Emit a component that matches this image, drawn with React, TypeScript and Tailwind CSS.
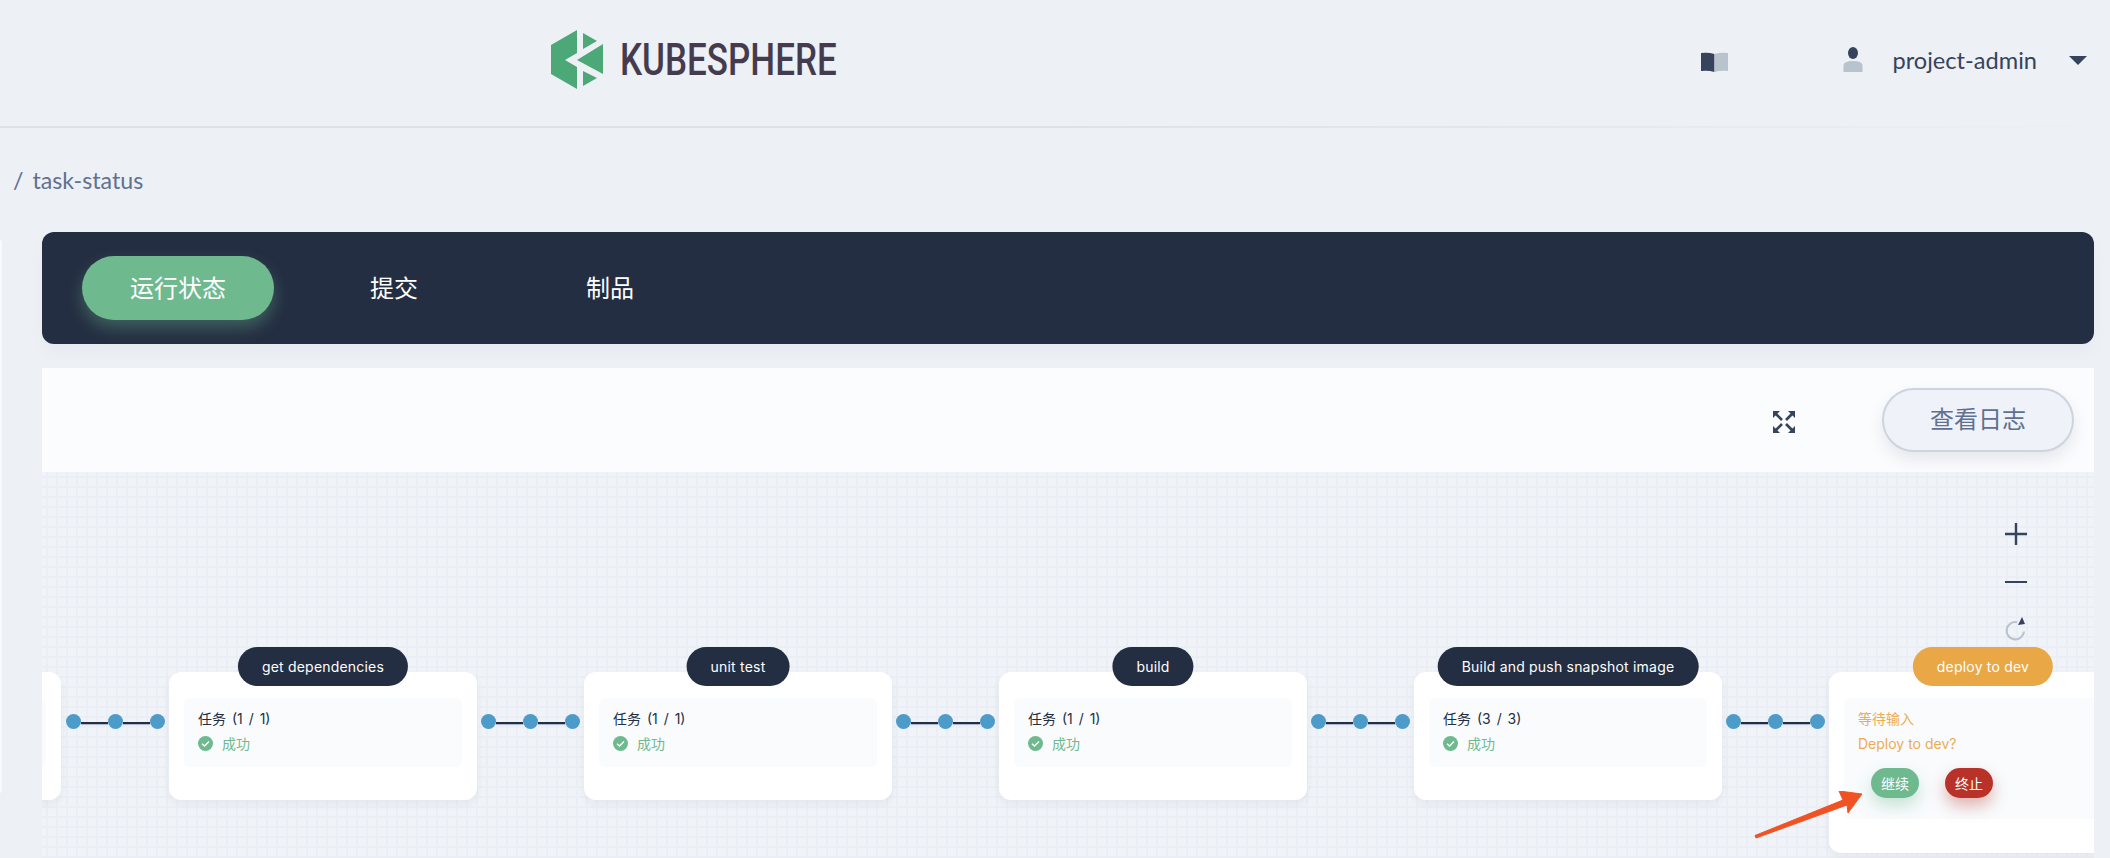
import React from "react";

const CJK = "font-['Inter','Noto_Sans_CJK_SC',sans-serif]";

const Logo = () => (
  <svg width="52" height="59" viewBox="0 0 52 59" fill="#4ca977">
    <polygon points="26,0 0,15 0,44 26,59 26,37 14,30 26,23" />
    <polygon points="32,3 46,11 32,19" />
    <polygon points="52,14 26,30 52,44" />
    <polygon points="32,41 46,48 32,56" />
  </svg>
);

const BookIcon = () => (
  <svg width="27" height="20" viewBox="0 0 27 20" className="mt-[5px]">
    <path d="M0 1Q7 0 13.5 2V20Q7 18 0 19Z" fill="#36435c" />
    <path d="M13.5 2Q20 0 27 1V19Q20 18 13.5 20Z" fill="#b8c3ce" />
  </svg>
);

const UserIcon = () => (
  <svg width="20" height="25" viewBox="0 0 20 25">
    <ellipse cx="10" cy="6" rx="5" ry="6" fill="#36435c" />
    <path d="M0.5 25V18.5Q0.5 14 10 14Q19.5 14 19.5 18.5V25Z" fill="#b8c3ce" />
  </svg>
);

const ExpandIcon = () => (
  <svg width="22" height="22" viewBox="0 0 22 22" fill="#36435c" stroke="#36435c" className="mt-[4px]">
    {[
      "",
      "translate(22 0) scale(-1 1)",
      "translate(0 22) scale(1 -1)",
      "translate(22 22) scale(-1 -1)",
    ].map((t, i) => (
      <g key={i} transform={t}>
        <polygon points="0,0 7,0 0,7" strokeWidth="0" />
        <line x1="3" y1="3" x2="9" y2="9" strokeWidth="2.6" />
      </g>
    ))}
  </svg>
);

const CheckIcon = () => (
  <svg width="15" height="15" viewBox="0 0 15 15">
    <circle cx="7.5" cy="7.5" r="7.5" fill="#6fb98f" />
    <path d="M4 7.8L6.5 10L11 5.6" fill="none" stroke="#fff" strokeWidth="1.4" />
  </svg>
);

const Connector = () => (
  <div className="w-[107px] shrink-0 mt-[42px] pl-[4px] pr-[4px] flex items-center">
    <div className="w-[15px] h-[15px] rounded-full bg-[#4d9bc9] shrink-0" />
    <div className="flex-1 h-[2px] mt-[2px] bg-[#242e42] shadow-[0_1px_1px_#a9b4c4]" />
    <div className="w-[15px] h-[15px] rounded-full bg-[#4d9bc9] shrink-0" />
    <div className="flex-1 h-[2px] mt-[2px] bg-[#242e42] shadow-[0_1px_1px_#a9b4c4]" />
    <div className="w-[15px] h-[15px] rounded-full bg-[#4d9bc9] shrink-0" />
  </div>
);

const Tag = ({ label, orange }: { label: string; orange?: boolean }) => (
  <div
    className={`absolute -top-[25px] left-1/2 -translate-x-1/2 h-[39px] px-[24px] flex items-center whitespace-nowrap rounded-[20px] text-[14px] tracking-[0.2px] text-white ${
      orange ? "bg-[#e9a745]" : "bg-[#242e42]"
    }`}
  >
    {label}
  </div>
);

const TaskNode = ({ label, tasks }: { label: string; tasks: string }) => (
  <div className="relative w-[308px] shrink-0 h-[128px] rounded-xl bg-white px-[15px] pt-[26px] shadow-[0_4px_8px_rgba(36,46,66,0.06)]">
    <Tag label={label} />
    <div className="h-[69px] rounded-md bg-[#f9fbfd] pl-[14px] pt-[8px] text-[14px] leading-[25px]">
      <div className="text-[#242e42] [word-spacing:2px]">{tasks}</div>
      <div className="flex items-center gap-[9px] text-[#6fb98f]">
        <CheckIcon />
        成功
      </div>
    </div>
  </div>
);

const App = () => {
  return (
    <div className={`relative w-full h-[858px] overflow-hidden bg-[#edf0f5] ${CJK}`}>
      {/* header */}
      <div className="h-[128px] flex flex-col">
        <div className="h-[126px] pb-[7px] flex items-center pl-[551px] pr-[23px]">
          <Logo />
          <div className="ml-[17px] w-[216px] h-[44px] leading-[44px] font-['Roboto',sans-serif] font-medium text-[44px] text-[#443c4e] whitespace-nowrap origin-left scale-x-[0.795]">
            KUBESPHERE
          </div>
          <div className="ml-auto flex items-center">
            <BookIcon />
            <div className="ml-[115px]">
              <UserIcon />
            </div>
            <div className="ml-[30px] font-['Lato',sans-serif] text-[23.6px] leading-[28px] text-[#36435c] mt-[1px]">
              project-admin
            </div>
            <svg width="18" height="9" viewBox="0 0 18 9" className="ml-[32px] mt-[2px]">
              <path d="M0 0H18L9 9Z" fill="#36435c" />
            </svg>
          </div>
        </div>
        <div className="h-[2px] bg-linear-to-r from-[#dde1e8] via-[#dde1e8] to-[#edf0f5]" />
      </div>

      {/* breadcrumb */}
      <div className="h-[104px] pt-[38px] pl-[13px] flex items-start font-['Lato',sans-serif] text-[23.2px] leading-[28px] text-[#5f7190]">
        <span>/</span>
        <span className="ml-[9px]">task-status</span>
      </div>

      <div className="flex items-start">
        <div className="w-[2px] h-[553px] mt-[8px] rounded-r bg-[#f8fafc]" />
        <div className="w-[2052px] ml-[40px] flex flex-col">
          {/* tabs */}
          <div className="h-[112px] rounded-xl bg-[#242e42] px-[40px] py-[24px] flex gap-[24px] text-[24px] text-white shadow-[0_8px_16px_rgba(36,46,66,0.03)]">
            <div className="w-[192px] h-[64px] pt-[2px] rounded-[32px] bg-[#6fb98f] flex items-center justify-center shadow-[0_8px_16px_rgba(111,185,143,0.36)]">
              运行状态
            </div>
            <div className="w-[192px] h-[64px] pt-[2px] flex items-center justify-center">提交</div>
            <div className="w-[192px] h-[64px] pt-[2px] flex items-center justify-center">制品</div>
          </div>

          {/* toolbar */}
          <div className="mt-[24px] h-[104px] bg-[#fbfcfe] flex items-center justify-end pr-[20px]">
            <ExpandIcon />
            <div className="ml-[87px] w-[192px] h-[64px] rounded-[32px] border-2 border-[#cdd4de] bg-[#eff2f8] flex items-center justify-center text-[24px] text-[#5f7190] shadow-[0_8px_16px_rgba(36,46,66,0.1)]">
              查看日志
            </div>
          </div>

          {/* pipeline canvas */}
          <div className="relative h-[386px] overflow-hidden bg-[#f0f3f8] bg-[linear-gradient(#ebeff5_2px,transparent_2px),linear-gradient(90deg,#ebeff5_2px,transparent_2px)] bg-[size:10px_10px] bg-[position:4px_4px] pt-[200px]">
            <div className="absolute top-[51px] right-[67px] flex flex-col items-center">
              <svg width="22" height="22" viewBox="0 0 22 22" stroke="#36435c" strokeWidth="2.4">
                <path d="M0 11H22M11 0V22" />
              </svg>
              <svg width="22" height="2" viewBox="0 0 22 2" stroke="#36435c" strokeWidth="2.4" className="mt-[36px]">
                <path d="M0 1H22" />
              </svg>
              <svg width="22" height="26" viewBox="0 0 22 26" className="mt-[33px]">
                <path d="M12 6.2A8.7 8.7 0 1 0 19 15.5" fill="none" stroke="#b9c4cf" strokeWidth="2.2" />
                <polygon points="17,1 13,9 20,8" fill="#36435c" />
              </svg>
            </div>

            <div className="flex items-start -ml-[288px]">
              {/* only the right edge of the first stage is in view */}
              <div className="w-[307px] mr-[1px] shrink-0 h-[128px] rounded-xl bg-white px-[15px] pt-[26px] shadow-[0_4px_8px_rgba(36,46,66,0.06)]">
                <div className="h-[69px] rounded-md bg-[#f9fbfd]" />
              </div>
              <Connector />
              <TaskNode label="get dependencies" tasks="任务 (1 / 1)" />
              <Connector />
              <TaskNode label="unit test" tasks="任务 (1 / 1)" />
              <Connector />
              <TaskNode label="build" tasks="任务 (1 / 1)" />
              <Connector />
              <TaskNode label="Build and push snapshot image" tasks="任务 (3 / 3)" />
              <Connector />
              <div className="relative w-[308px] shrink-0 h-[181px] rounded-xl bg-white px-[15px] pt-[26px] shadow-[0_4px_8px_rgba(36,46,66,0.06)]">
                <Tag label="deploy to dev" orange />
                <div className="h-[121px] rounded-md bg-[#f9fbfd] pl-[14px] pt-[8px] text-[14px] leading-[23px] text-[#eeab52]">
                  <div className="leading-[26px]">等待输入</div>
                  <div>Deploy to dev?</div>
                  <div className="mt-[13px] ml-[13px] flex gap-[26px] text-white">
                    <div className="w-[48px] h-[30px] rounded-[15px] bg-[#6fb98f] flex items-center justify-center shadow-[0_8px_16px_rgba(111,185,143,0.36)]">
                      继续
                    </div>
                    <div className="w-[48px] h-[30px] rounded-[15px] bg-[#b8322a] flex items-center justify-center shadow-[0_8px_16px_rgba(184,50,42,0.36)]">
                      终止
                    </div>
                  </div>
                </div>
              </div>
            </div>
          </div>
        </div>
      </div>

      {/* annotation arrow */}
      <svg width="110" height="48" viewBox="0 0 110 48" className="absolute left-[1754px] top-[791px]">
        <polygon
          points="1,44.5 89,9 85,0 108,3 94,22 93,14 2,47"
          fill="#f15224"
          stroke="#f15224"
          strokeWidth="1"
          strokeLinejoin="round"
        />
      </svg>
    </div>
  );
};

export default App;
